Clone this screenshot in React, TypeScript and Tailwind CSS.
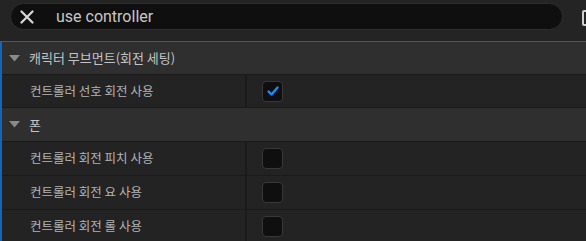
import React from "react";

const font = {
  fontFamily: '"Noto Sans CJK KR", "Noto Sans", Roboto, sans-serif',
};

function Check({ checked }: { checked?: boolean }) {
  return (
    <div className="flex h-[21px] w-[21px] items-center justify-center rounded-[4px] border border-[#383838] bg-[#0f0f0f]">
      {checked && (
        <svg width="14" height="14" viewBox="0 0 14 14">
          <path
            d="M2.5 7.5 L5.5 10.5 L11.5 3.5"
            fill="none"
            stroke="#1c8cff"
            strokeWidth="2.4"
            strokeLinecap="round"
            strokeLinejoin="round"
          />
        </svg>
      )}
    </div>
  );
}

function Category({ label, tall }: { label: string; tall?: boolean }) {
  return (
    <div
      className={`flex items-center border-b border-[#1a1a1a] bg-[#2f2f2f] pl-[7px] ${
        tall ? "h-[34px]" : "h-[33px]"
      }`}
    >
      <svg width="11" height="7" viewBox="0 0 11 7" className="mr-[9px]">
        <path d="M0 0 H11 L5.5 6.5 Z" fill="#8a8a8a" />
      </svg>
      <span className="text-[13px] text-[#c4c4c4]">{label}</span>
    </div>
  );
}

function Row({
  label,
  checked,
  tall,
}: {
  label: string;
  checked?: boolean;
  tall?: boolean;
}) {
  return (
    <div
      className={`flex border-b border-[#1a1a1a] bg-[#232323] ${
        tall ? "h-[34px]" : "h-[33px]"
      }`}
    >
      <div className="flex w-[245px] items-center border-r-2 border-[#1a1a1a] pl-[28px] text-[12.5px] text-[#b4b4b4]">
        {label}
      </div>
      <div className="flex items-center pl-[15px]">
        <Check checked={checked} />
      </div>
    </div>
  );
}

export default function App() {
  return (
    <div className="h-[241px] w-[586px] overflow-hidden bg-[#232323]" style={font}>
      <div className="flex h-[41px] items-start bg-[#242424] pt-[3px]">
        <div className="ml-[10px] flex h-[27px] w-[553px] shrink-0 items-center rounded-full border border-[#2e2e2e] bg-[#0f0f0f]">
          <svg width="14" height="14" viewBox="0 0 14 14" className="ml-[9px]">
            <path
              d="M1.5 1.5 L12.5 12.5 M12.5 1.5 L1.5 12.5"
              stroke="#d8d8d8"
              strokeWidth="2.2"
              strokeLinecap="round"
            />
          </svg>
          <span
            className="ml-[22px] text-[16px] text-[#c8c8c8]"
            style={{ fontFamily: "Roboto, sans-serif" }}
          >
            use controller
          </span>
        </div>
        <div className="ml-[19px] mt-[7px] h-[16px] w-[14px] shrink-0 rounded-[2px] border-2 border-[#d0d0d0] bg-[#242424]" />
      </div>
      <div className="border-t border-l-2 border-[#1664b8]">
        <Category label="캐릭터 무브먼트(회전 세팅)" />
        <Row label="컨트롤러 선호 회전 사용" checked />
        <Category label="폰" tall />
        <Row label="컨트롤러 회전 피치 사용" tall />
        <Row label="컨트롤러 회전 요 사용" tall />
        <Row label="컨트롤러 회전 롤 사용" tall />
      </div>
    </div>
  );
}
